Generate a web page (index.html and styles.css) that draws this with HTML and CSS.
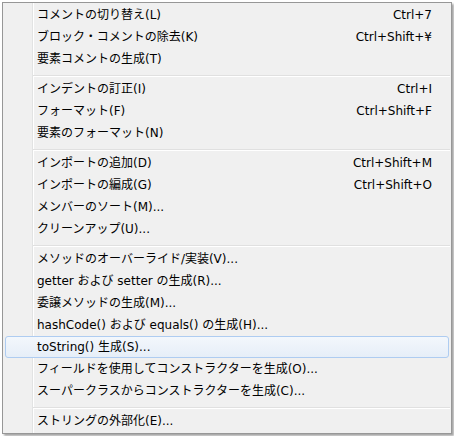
FILE: index.html
```html
<!DOCTYPE html>
<html lang="ja">
<head>
<meta charset="utf-8">
<link rel="stylesheet" href="styles.css">
</head>
<body>
<div class="menu">
  <div class="item"><span class="label">コメントの切り替え(L)</span><span class="key">Ctrl+7</span></div>
  <div class="item"><span class="label">ブロック・コメントの除去(K)</span><span class="key">Ctrl+Shift+¥</span></div>
  <div class="item"><span class="label">要素コメントの生成(T)</span></div>
  <div class="sep"></div>
  <div class="item"><span class="label">インデントの訂正(I)</span><span class="key">Ctrl+I</span></div>
  <div class="item"><span class="label">フォーマット(F)</span><span class="key">Ctrl+Shift+F</span></div>
  <div class="item"><span class="label">要素のフォーマット(N)</span></div>
  <div class="sep"></div>
  <div class="item"><span class="label">インポートの追加(D)</span><span class="key">Ctrl+Shift+M</span></div>
  <div class="item"><span class="label">インポートの編成(G)</span><span class="key">Ctrl+Shift+O</span></div>
  <div class="item"><span class="label">メンバーのソート(M)...</span></div>
  <div class="item"><span class="label">クリーンアップ(U)...</span></div>
  <div class="sep"></div>
  <div class="item"><span class="label">メソッドのオーバーライド/実装(V)...</span></div>
  <div class="item"><span class="label">getter および setter の生成(R)...</span></div>
  <div class="item"><span class="label">委譲メソッドの生成(M)...</span></div>
  <div class="item"><span class="label">hashCode() および equals() の生成(H)...</span></div>
  <div class="item active"><span class="label">toString() 生成(S)...</span></div>
  <div class="item"><span class="label">フィールドを使用してコンストラクターを生成(O)...</span></div>
  <div class="item"><span class="label">スーパークラスからコンストラクターを生成(C)...</span></div>
  <div class="sep"></div>
  <div class="item"><span class="label">ストリングの外部化(E)...</span></div>
</div>
</body>
</html>
```
FILE: styles.css
```css
html, body {
  margin: 0;
  padding: 0;
}
body {
  width: 454px;
  height: 436px;
  background: #ffffff;
  overflow: hidden;
  font-family: "DejaVu Sans", "Noto Sans CJK JP", sans-serif;
  font-size: 12px;
  color: #000;
}
.menu {
  margin: 2px 0 0 2px;
  width: 448px;
  padding: 1px 0;
  border: 1px solid #979797;
  background:
    linear-gradient(to right, transparent 29px, #e2e3e3 29px, #e2e3e3 30px, #ffffff 30px, #ffffff 31px, transparent 31px),
    #f0f0f0;
  box-shadow: 2px 2px 2px rgba(0, 0, 0, 0.35);
  display: flex;
  flex-direction: column;
}
.item {
  height: 20px;
  margin: 0 2px;
  padding: 0 16px 0 31px;
  border: 1px solid transparent;
  border-radius: 3px;
  display: flex;
  align-items: center;
  justify-content: space-between;
  white-space: nowrap;
  line-height: 20px;
}
.item.active {
  border-color: #aeccf1;
  background: linear-gradient(to bottom, #f3f7fc, #e6eef8);
}
.sep {
  height: 8px;
  margin: 0 1px 0 30px;
  background: linear-gradient(to bottom, transparent 5px, #e0e0e0 5px, #e0e0e0 6px, #ffffff 6px, #ffffff 7px, transparent 7px);
}
```
